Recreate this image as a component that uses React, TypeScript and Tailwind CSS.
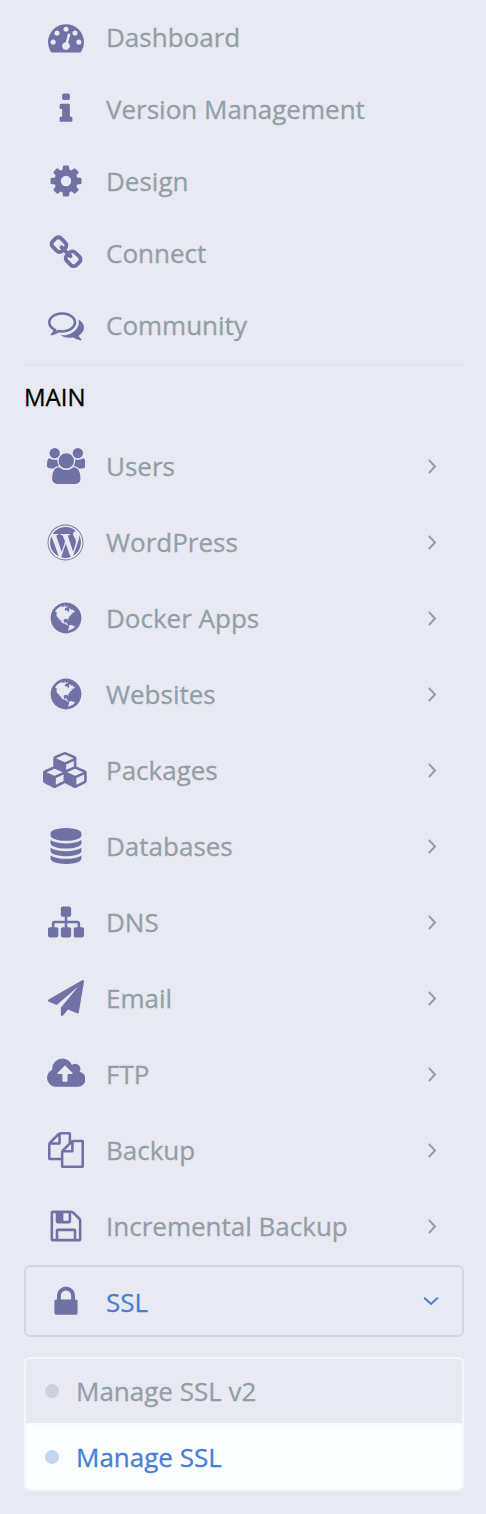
import { FaWordpress } from "react-icons/fa";

const PATHS = {
  dashboard:
    "M384 1152q0-53-37.5-90.5t-90.5-37.5-90.5 37.5-37.5 90.5 37.5 90.5 90.5 37.5 90.5-37.5 37.5-90.5zm192-448q0-53-37.5-90.5t-90.5-37.5-90.5 37.5-37.5 90.5 37.5 90.5 90.5 37.5 90.5-37.5 37.5-90.5zm428 481l101-382q6-26-7.5-48.5t-38.5-29.5-48 6.5-30 39.5l-101 382q-60 5-107 43.5t-63 98.5q-20 77 20 146t117 89 146-20 89-117q16-60-6-117t-72-91zm660-33q0-53-37.5-90.5t-90.5-37.5-90.5 37.5-37.5 90.5 37.5 90.5 90.5 37.5 90.5-37.5 37.5-90.5zm-640-640q0-53-37.5-90.5t-90.5-37.5-90.5 37.5-37.5 90.5 37.5 90.5 90.5 37.5 90.5-37.5 37.5-90.5zm448 192q0-53-37.5-90.5t-90.5-37.5-90.5 37.5-37.5 90.5 37.5 90.5 90.5 37.5 90.5-37.5 37.5-90.5zm320 448q0 261-141 483-19 29-54 29h-1402q-35 0-54-29-141-221-141-483 0-182 71-348t191-286 286-191 348-71 348 71 286 191 191 286 71 348z",
  info: "M1216 1344v128q0 26-19 45t-45 19h-512q-26 0-45-19t-19-45v-128q0-26 19-45t45-19h64v-384h-64q-26 0-45-19t-19-45v-128q0-26 19-45t45-19h384q26 0 45 19t19 45v576h64q26 0 45 19t19 45zm-128-1152v192q0 26-19 45t-45 19h-256q-26 0-45-19t-19-45v-192q0-26 19-45t45-19h256q26 0 45 19t19 45z",
  cog: "M1152 896q0-106-75-181t-181-75-181 75-75 181 75 181 181 75 181-75 75-181zm512-109v222q0 12-8 23t-20 13l-185 28q-19 54-39 91 35 50 107 138 10 12 10 25t-9 23q-27 37-99 108t-94 71q-12 0-26-9l-138-108q-44 23-91 38-16 136-29 186-7 28-36 28h-222q-14 0-24.5-8.5t-11.5-21.5l-28-184q-49-16-90-37l-141 107q-10 9-25 9-14 0-25-11-126-114-165-168-7-10-7-23 0-12 8-23 15-21 51-66.5t54-70.5q-27-50-41-99l-183-27q-13-2-21-12.5t-8-23.5v-222q0-12 8-23t19-13l186-28q14-46 39-92-40-57-107-138-10-12-10-24 0-10 9-23 26-36 98.5-107.5t94.5-71.5q13 0 26 10l138 107q44-23 91-38 16-136 29-186 7-28 36-28h222q14 0 24.5 8.5t11.5 21.5l28 184q49 16 90 37l142-107q9-9 24-9 13 0 25 10 129 119 165 170 7 8 7 22 0 12-8 23-15 21-51 66.5t-54 70.5q26 50 41 98l183 28q13 2 21 12.5t8 23.5z",
  link: "M1520 1216q0-40-28-68l-208-208q-28-28-68-28-42 0-72 32 3 3 19 18.5t21.5 21.5 15 19 13 25.5 3.5 27.5q0 40-28 68t-68 28q-15 0-27.5-3.5t-25.5-13-19-15-21.5-21.5-18.5-19q-33 31-33 73 0 40 28 68l206 207q27 27 68 27 40 0 68-26l147-146q28-28 28-67zm-703-705q0-40-28-68l-206-207q-28-28-68-28-39 0-68 27l-147 146q-28 28-28 67 0 40 28 68l208 208q27 27 68 27 42 0 72-31-3-3-19-18.5t-21.5-21.5-15-19-13-25.5-3.5-27.5q0-40 28-68t68-28q15 0 27.5 3.5t25.5 13 19 15 21.5 21.5 18.5 19q33-31 33-73zm895 705q0 120-85 203l-147 146q-83 83-203 83-121 0-204-85l-206-207q-83-83-83-203 0-123 88-209l-88-88q-86 88-208 88-120 0-204-84l-208-208q-84-84-84-204t85-203l147-146q83-83 203-83 121 0 204 85l206 207q83 83 83 203 0 123-88 209l88 88q86-88 208-88 120 0 204 84l208 208q84 84 84 204z",
  comments:
    "M704 384q-153 0-286 52t-211.5 141-78.5 191q0 82 53 158t149 132l97 56-35 84q34-20 62-39l44-31 53 10q78 14 153 14 153 0 286-52t211.5-141 78.5-191-78.5-191-211.5-141-286-52zm0-128q191 0 353.5 68.5t256.5 186.5 94 257-94 257-256.5 186.5-353.5 68.5q-86 0-176-16-124 88-278 128-36 9-86 16h-3q-11 0-20.5-8t-11.5-21q-1-3-1-6.5t.5-6.5 2-6l2.5-5 3.5-5.5 4-5 4.5-5 4-4.5q5-6 23-25t26-29.5 22.5-29 25-38.5 20.5-44q-124-72-195-177t-71-224q0-139 94-257t256.5-186.5 353.5-68.5zm822 1169q10 24 20.5 44t25 38.5 22.5 29 26 29.5 23 25q1 1 4 4.5t4.5 5 4 5 3.5 5.5l2.5 5 2 6 .5 6.5-1 6.5q-3 14-13 22t-22 7q-50-7-86-16-154-40-278-128-90 16-176 16-271 0-472-132 58 4 88 4 161 0 309-45t264-129q125-92 192-212t67-254q0-77-23-152 129 71 204 178t75 230q0 120-71 224.5t-195 176.5z",
  users:
    "M593 896q-162 5-265 128h-134q-82 0-138-40.5t-56-118.5q0-353 124-353 6 0 43.5 21t97.5 42.5 119 21.5q67 0 133-23-5 37-5 66 0 139 81 256zm1071 637q0 120-73 189.5t-194 69.5h-874q-121 0-194-69.5t-73-189.5q0-53 3.5-103.5t14-109 26.5-108.5 43-97.5 62-81 85.5-53.5 111.5-20q10 0 43 21.5t73 48 107 48 135 21.5 135-21.5 107-48 73-48 43-21.5q61 0 111.5 20t85.5 53.5 62 81 43 97.5 26.5 108.5 14 109 3.5 103.5zm-1024-1277q0 106-75 181t-181 75-181-75-75-181 75-181 181-75 181 75 75 181zm704 384q0 159-112.5 271.5t-271.5 112.5-271.5-112.5-112.5-271.5 112.5-271.5 271.5-112.5 271.5 112.5 112.5 271.5zm576 225q0 78-56 118.5t-138 40.5h-134q-103-123-265-128 81-117 81-256 0-29-5-66 66 23 133 23 59 0 119-21.5t97.5-42.5 43.5-21q124 0 124 353zm-128-609q0 106-75 181t-181 75-181-75-75-181 75-181 181-75 181 75 75 181z",
  globe:
    "M896 128q209 0 385.5 103t279.5 279.5 103 385.5-103 385.5-279.5 279.5-385.5 103-385.5-103-279.5-279.5-103-385.5 103-385.5 279.5-279.5 385.5-103zm274 521q-2 1-9.5 9.5t-13.5 9.5q2 0 4.5-5t5-11 3.5-7q6-7 22-15 14-6 52-12 34-8 51 11-2-2 9.5-13t14.5-12q3-2 15-4.5t15-7.5l2-22q-12 1-17.5-7t-6.5-21q0 2-6 8 0-7-4.5-8t-11.5 1-9 1q-10-3-15-7.5t-8-16.5-4-15q-2-5-9.5-11t-9.5-10q-1-2-2.5-5.5t-3-6.5-4-5.5-5.5-2.5-7 5-7.5 10-4.5 5q-3-2-6-1.5t-4.5 1-4.5 3-5 3.5q-3 2-8.5 3t-8.5 2q15-5-1-11-10-4-16-3 9-4 7.5-12t-8.5-14h5q-1-4-8.5-8.5t-17.5-8.5-13-6q-8-5-34-9.5t-33-.5q-5 6-4.5 10.5t4 14 3.5 12.5q1 6-5.5 13t-6.5 12q0 7 14 15.5t10 21.5q-3 8-16 16t-16 12q-5 8-1.5 18.5t10.5 16.5q2 2 1.5 4t-3.5 4.5-5.5 4-6.5 3.5l-3 2q-11 5-20.5-6t-13.5-26q-7-25-16-30-23-8-29 1-5-13-41-26-25-9-58-4 6-1 0-15-7-15-19-12 3-6 4-17.5t1-13.5q3-13 12-23 1-1 7-8.5t9.5-13.5.5-6q35 4 50-11 5-5 11.5-17t10.5-17q9-6 14-5.5t14.5 5.5 14.5 5q14 1 15.5-11t-7.5-20q12 1 3-17-4-7-8-9-12-4-27 5-8 4 2 8-1-1-9.5 10.5t-16.5 17.5-16-5q-1-1-5.5-13.5t-9.5-13.5q-8 0-16 15 3-8-11-15t-24-8q19-12-8-27-7-4-20.5-5t-19.5 4q-5 7-5.5 11.5t5 8 10.5 5.5 11.5 4 8.5 3q14 10 8 14-2 1-8.5 3.5t-11.5 4.5-6 4q-3 4 0 14t-2 14q-5-5-9-17.5t-7-16.5q7 9-25 6l-10-1q-4 0-16 2t-20.5 1-13.5-8q-4-8 0-20 1-4 4-2-4-3-11-9.5t-10-8.5q-46 15-94 41 6 1 12-1 5-2 13-6.5t10-5.5q34-14 42-7l5-5q14 16 20 25-7-4-30-1-20 6-22 12 7 12 5 18-4-3-11.5-10t-14.5-11-15-5q-16 0-22 1-146 80-235 222 7 7 12 8 4 1 5 9t2.5 11 11.5-3q9 8 3 19 1-1 44 27 19 17 21 21 3 11-10 18-1-2-9-9t-9-4q-3 5 .5 18.5t10.5 12.5q-7 0-9.5 16t-2.5 35.5-1 23.5l2 1q-3 12 5.5 34.5t21.5 19.5q-13 3 20 43 6 8 8 9 3 2 12 7.5t15 10 10 10.5q4 5 10 22.5t14 23.5q-2 6 9.5 20t10.5 23q-1 0-2.5 1t-2.5 1q3 7 15.5 14t15.5 13q1 3 2 10t3 11 8 2q2-20-24-62-15-25-17-29-3-5-5.5-15.5t-4.5-14.5q2 0 6 1.5t8.5 3.5 7.5 4 2 3q-3 7 2 17.5t12 18.5 17 19 12 13q6 6 14 19.5t0 13.5q9 0 20 10.5t17 19.5q5 8 8 26t5 24q2 7 8.5 13.5t12.5 9.5l16 8 13 7q5 2 18.5 10.5t21.5 11.5q10 4 16 4t14.5-2.5 13.5-3.5q15-2 29 15t21 21q36 19 55 11-2 1 .5 7.5t8 15.5 9 14.5 5.5 8.5q5 6 18 15t18 15q6-4 7-9-3 8 7 20t18 10q14-3 14-32-31 15-49-18 0-1-2.5-5.5t-4-8.5-2.5-8.5 0-7.5 5-3q9 0 10-3.5t-2-12.5-4-13q-1-8-11-20t-12-15q-5 9-16 8t-16-9q0 1-1.5 5.5t-1.5 6.5q-13 0-15-1 1-3 2.5-17.5t3.5-22.5q1-4 5.5-12t7.5-14.5 4-12.5-4.5-9.5-17.5-2.5q-19 1-26 20-1 3-3 10.5t-5 11.5-9 7q-7 3-24 2t-24-5q-13-8-22.5-29t-9.5-37q0-10 2.5-26.5t3-25-5.5-24.5q3-2 9-9.5t10-10.5q2-1 4.5-1.5t4.5 0 4-1.5 3-6q-1-1-4-3-3-3-4-3 7 3 28.5-1.5t27.5 1.5q15 11 22-2 0-1-2.5-9.5t-.5-13.5q5 27 29 9 3 3 15.5 5t17.5 5q3 2 7 5.5t5.5 4.5 5-.5 8.5-6.5q10 14 12 24 11 40 19 44 7 3 11 2t4.5-9.5 0-14-1.5-12.5l-1-8v-18l-1-8q-15-3-18.5-12t1.5-18.5 15-18.5q1-1 8-3.5t15.5-6.5 12.5-8q21-19 15-35 7 0 11-9-1 0-5-3t-7.5-5-4.5-2q9-5 2-16 5-3 7.5-11t7.5-10q9 12 21 2 8-8 1-16 5-7 20.5-10.5t18.5-9.5q7 2 8-2t1-12 3-12q4-5 15-9t13-5l17-11q3-4 0-4 18 2 31-11 10-11-6-20 3-6-3-9.5t-15-5.5q3-1 11.5-.5t10.5-1.5q15-10-7-16-17-5-43 12zm-163 877q206-36 351-189-3-3-12.5-4.5t-12.5-3.5q-18-7-24-8 1-7-2.5-13t-8-9-12.5-8-11-7q-2-2-7-6t-7-5.5-7.5-4.5-8.5-2-10 1l-3 1q-3 1-5.5 2.5t-5.5 3-4 3 0 2.5q-21-17-36-22-5-1-11-5.5t-10.5-7-10-1.5-11.5 7q-5 5-6 15t-2 13q-7-5 0-17.5t2-18.5q-3-6-10.5-4.5t-12 4.5-11.5 8.5-9 6.5-8.5 5.5-8.5 7.5q-3 4-6 12t-5 11q-2-4-11.5-6.5t-9.5-5.5q2 10 4 35t5 38q7 31-12 48-27 25-29 40-4 22 12 26 0 7-8 20.5t-7 21.5q0 6 2 16z",
  cubes:
    "M640 1632l384-192v-314l-384 164v342zm-64-454l404-173-404-173-404 173zm1088 454l384-192v-314l-384 164v342zm-64-454l404-173-404-173-404 173zm-448-293l384-165v-266l-384 164v267zm-64-379l441-189-441-189-441 189zm1088 518v416q0 36-19 67t-52 47l-448 224q-25 14-57 14t-57-14l-448-224q-4-2-7-4-2 2-7 4l-448 224q-25 14-57 14t-57-14l-448-224q-33-16-52-47t-19-67v-416q0-38 21.5-70t56.5-48l434-186v-400q0-38 21.5-70t56.5-48l448-192q23-10 50-10t50 10l448 192q35 16 56.5 48t21.5 70v400l434 186q36 16 57 48t21 70z",
  database:
    "M896 768q237 0 443-43t325-127v170q0 69-103 128t-280 93.5-385 34.5-385-34.5-280-93.5-103-128v-170q119 84 325 127t443 43zm0 768q237 0 443-43t325-127v170q0 69-103 128t-280 93.5-385 34.5-385-34.5-280-93.5-103-128v-170q119 84 325 127t443 43zm0-384q237 0 443-43t325-127v170q0 69-103 128t-280 93.5-385 34.5-385-34.5-280-93.5-103-128v-170q119 84 325 127t443 43zm0-1152q208 0 385 34.5t280 93.5 103 128v128q0 69-103 128t-280 93.5-385 34.5-385-34.5-280-93.5-103-128v-128q0-69 103-128t280-93.5 385-34.5z",
  sitemap:
    "M1792 1248v320q0 40-28 68t-68 28h-320q-40 0-68-28t-28-68v-320q0-40 28-68t68-28h96v-192h-512v192h96q40 0 68 28t28 68v320q0 40-28 68t-68 28h-320q-40 0-68-28t-28-68v-320q0-40 28-68t68-28h96v-192h-512v192h96q40 0 68 28t28 68v320q0 40-28 68t-68 28h-320q-40 0-68-28t-28-68v-320q0-40 28-68t68-28h96v-192q0-52 38-90t90-38h512v-192h-96q-40 0-68-28t-28-68v-320q0-40 28-68t68-28h320q40 0 68 28t28 68v320q0 40-28 68t-68 28h-96v192h512q52 0 90 38t38 90v192h96q40 0 68 28t28 68z",
  plane:
    "M1764 11q33 24 27 64l-256 1536q-5 29-32 45-14 8-31 8-11 0-24-5l-453-185-242 295q-18 23-49 23-13 0-22-4-19-7-30.5-23.5t-11.5-36.5v-349l864-1059-1069 925-395-162q-37-14-40-55-2-40 32-59l1664-960q15-9 32-9 20 0 36 11z",
  cloud:
    "M1280 864q0-14-9-23l-352-352q-9-9-23-9t-23 9l-351 351q-10 12-10 24 0 14 9 23t23 9h224v352q0 13 9.5 22.5t22.5 9.5h192q13 0 22.5-9.5t9.5-22.5v-352h224q13 0 22.5-9.5t9.5-22.5zm640 288q0 159-112.5 271.5t-271.5 112.5h-1088q-185 0-316.5-131.5t-131.5-316.5q0-130 70-240t188-165q-2-30-2-43 0-212 150-362t362-150q156 0 285.5 87t188.5 231q71-62 166-62 106 0 181 75t75 181q0 76-41 138 130 31 213.5 135.5t83.5 238.5z",
  files:
    "M1696 384q40 0 68 28t28 68v1216q0 40-28 68t-68 28h-960q-40 0-68-28t-28-68v-288h-544q-40 0-68-28t-28-68v-672q0-40 20-88t48-76l408-408q28-28 76-48t88-20h416q40 0 68 28t28 68v328q68-40 128-40h416zm-544 213l-299 299h299v-299zm-640-384l-299 299h299v-299zm196 647l316-316v-416h-384v416q0 40-28 68t-68 28h-416v640h512v-256q0-40 20-88t48-76zm956 804v-1152h-384v416q0 40-28 68t-68 28h-416v640h896z",
  floppy:
    "M512 1536h768v-384h-768v384zm896 0h128v-896q0-14-10-38.5t-20-34.5l-281-281q-10-10-34-20t-39-10v416q0 40-28 68t-68 28h-576q-40 0-68-28t-28-68v-416h-128v1280h128v-416q0-40 28-68t68-28h832q40 0 68 28t28 68v416zm-384-928v-320q0-13-9.5-22.5t-22.5-9.5h-192q-13 0-22.5 9.5t-9.5 22.5v320q0 13 9.5 22.5t22.5 9.5h192q13 0 22.5-9.5t9.5-22.5zm640 32v928q0 40-28 68t-68 28h-1344q-40 0-68-28t-28-68v-1344q0-40 28-68t68-28h928q40 0 88 20t76 48l280 280q28 28 48 76t20 88z",
  lock: "M640 768h512v-192q0-106-75-181t-181-75-181 75-75 181v192zm832 96v576q0 40-28 68t-68 28h-960q-40 0-68-28t-28-68v-576q0-40 28-68t68-28h32v-192q0-184 132-316t316-132 316 132 132 316v192h32q40 0 68 28t28 68z",
};

type GlyphName = keyof typeof PATHS;
type IconName = GlyphName | "wordpress";

// Glyphs share one height; the wide ones need a wider canvas.
const WIDTHS: Partial<Record<GlyphName, number>> = {
  users: 1920,
  cloud: 1920,
  cubes: 2304,
};

function Icon({ name }: { name: IconName }) {
  return (
    <span className="flex w-11 shrink-0 items-center justify-center text-[#7072a5]">
      {name === "wordpress" ? (
        <FaWordpress className="mr-px size-[37px] shrink-0" />
      ) : (
        <svg
          className="h-9 w-auto shrink-0"
          viewBox={`0 0 ${WIDTHS[name] ?? 1792} 1792`}
          fill="currentColor"
          aria-hidden="true"
        >
          <path d={PATHS[name]} />
        </svg>
      )}
    </span>
  );
}

function Chevron({ open }: { open?: boolean }) {
  return open ? (
    <svg className="mr-[23px] mb-[3px] ml-auto h-[10px] w-4" viewBox="0 0 16 10" fill="none" stroke="currentColor" strokeWidth="2">
      <path d="M1.2 1.7 8 7.9l6.8-6.2" />
    </svg>
  ) : (
    <svg className="mr-[25px] ml-auto h-4 w-[10px]" viewBox="0 0 10 16" fill="none" stroke="currentColor" strokeWidth="2">
      <path d="M1.8 2 8 8.5 1.8 15" />
    </svg>
  );
}

const topItems: { icon: IconName; label: string }[] = [
  { icon: "dashboard", label: "Dashboard" },
  { icon: "info", label: "Version Management" },
  { icon: "cog", label: "Design" },
  { icon: "link", label: "Connect" },
  { icon: "comments", label: "Community" },
];

const mainItems: { icon: IconName; label: string; open?: boolean }[] = [
  { icon: "users", label: "Users" },
  { icon: "wordpress", label: "WordPress" },
  { icon: "globe", label: "Docker Apps" },
  { icon: "globe", label: "Websites" },
  { icon: "cubes", label: "Packages" },
  { icon: "database", label: "Databases" },
  { icon: "sitemap", label: "DNS" },
  { icon: "plane", label: "Email" },
  { icon: "cloud", label: "FTP" },
  { icon: "files", label: "Backup" },
  { icon: "floppy", label: "Incremental Backup" },
  { icon: "lock", label: "SSL", open: true },
];

export default function App() {
  return (
    <nav className="h-[1514px] w-[486px] overflow-hidden bg-[#e8e9f2] pt-px pr-[22px] pl-6 font-['Open_Sans',sans-serif] text-[26px] leading-9 text-[#929fa7] [-webkit-text-stroke:0.3px]">
      <ul>
        {topItems.map((item) => (
          <li key={item.label} className="flex h-[72px] items-center pl-5">
            <Icon name={item.icon} />
            <span className="ml-[18px]">{item.label}</span>
          </li>
        ))}
      </ul>
      <div className="mt-[3px] h-0.5 bg-[#e2e5ee]" />
      <h2 className="mt-[13px] h-9 text-2xl leading-9 text-black">MAIN</h2>
      <ul className="mt-[14px] flex flex-col gap-1">
        {mainItems.map((item) => (
          <li
            key={item.label}
            className={
              item.open
                ? "flex h-[72px] items-center rounded-md border-2 border-[#d3d6e1] pt-0.5 pl-[18px] text-[#4680d2]"
                : "flex h-[72px] items-center border-2 border-transparent pt-0.5 pl-[18px]"
            }
          >
            <Icon name={item.icon} />
            <span className="ml-[18px]">{item.label}</span>
            <Chevron open={item.open} />
          </li>
        ))}
      </ul>
      <ul className="mt-5 overflow-hidden rounded-md border-2 border-[#f5f6fa]">
        <li className="flex h-16 items-center pl-[19px]">
          <span className="size-[14px] rounded-full bg-[#cfd1da]" />
          <span className="ml-[17px]">Manage SSL v2</span>
        </li>
        <li className="flex h-[66px] items-center border-t-2 border-[#f8f9fc] bg-[#fcfdff] pl-[19px] text-[#4680d2]">
          <span className="size-[14px] rounded-full bg-[#c3d5f2]" />
          <span className="ml-[17px]">Manage SSL</span>
        </li>
      </ul>
    </nav>
  );
}
